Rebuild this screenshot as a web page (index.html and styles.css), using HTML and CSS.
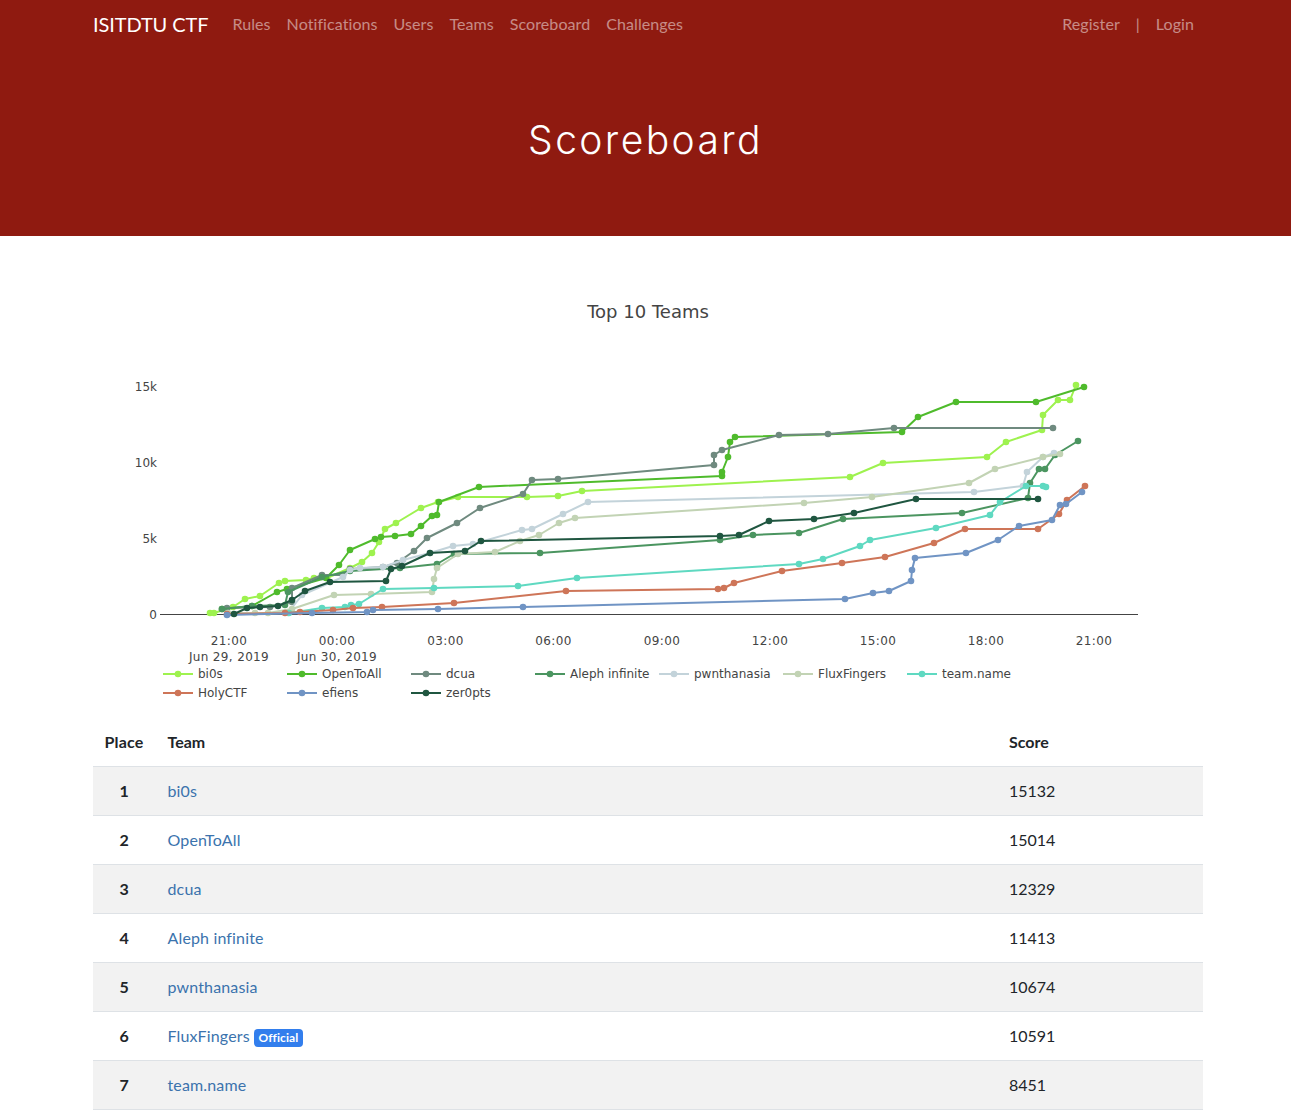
FILE: index.html
```html
<!DOCTYPE html>
<html lang="en">
<head>
<meta charset="utf-8">
<title>Scoreboard</title>
<link rel="stylesheet" href="styles.css">
</head>
<body>
<div class="hero">
  <nav class="navbar">
    <a class="brand" href="#">ISITDTU CTF</a>
    <ul class="nav-left">
      <li><a href="#">Rules</a></li>
      <li><a href="#">Notifications</a></li>
      <li><a href="#">Users</a></li>
      <li><a href="#">Teams</a></li>
      <li><a href="#">Scoreboard</a></li>
      <li><a href="#">Challenges</a></li>
    </ul>
    <ul class="nav-right">
      <li><a href="#">Register</a></li>
      <li class="sep">|</li>
      <li><a href="#">Login</a></li>
    </ul>
  </nav>
  <h1 class="title">Scoreboard</h1>
</div>
<main class="content">
  <svg class="chart" width="1291" height="484" viewBox="0 236 1291 484" xmlns="http://www.w3.org/2000/svg">
    <defs>
      <marker id="m0" class="mk" markerUnits="userSpaceOnUse" markerWidth="8" markerHeight="8" refX="4" refY="4"><circle cx="4" cy="4" r="3.3" class="f0"/></marker>
      <marker id="m1" class="mk" markerUnits="userSpaceOnUse" markerWidth="8" markerHeight="8" refX="4" refY="4"><circle cx="4" cy="4" r="3.3" class="f1"/></marker>
      <marker id="m2" class="mk" markerUnits="userSpaceOnUse" markerWidth="8" markerHeight="8" refX="4" refY="4"><circle cx="4" cy="4" r="3.3" class="f2"/></marker>
      <marker id="m3" class="mk" markerUnits="userSpaceOnUse" markerWidth="8" markerHeight="8" refX="4" refY="4"><circle cx="4" cy="4" r="3.3" class="f3"/></marker>
      <marker id="m4" class="mk" markerUnits="userSpaceOnUse" markerWidth="8" markerHeight="8" refX="4" refY="4"><circle cx="4" cy="4" r="3.3" class="f4"/></marker>
      <marker id="m5" class="mk" markerUnits="userSpaceOnUse" markerWidth="8" markerHeight="8" refX="4" refY="4"><circle cx="4" cy="4" r="3.3" class="f5"/></marker>
      <marker id="m6" class="mk" markerUnits="userSpaceOnUse" markerWidth="8" markerHeight="8" refX="4" refY="4"><circle cx="4" cy="4" r="3.3" class="f6"/></marker>
      <marker id="m7" class="mk" markerUnits="userSpaceOnUse" markerWidth="8" markerHeight="8" refX="4" refY="4"><circle cx="4" cy="4" r="3.3" class="f7"/></marker>
      <marker id="m8" class="mk" markerUnits="userSpaceOnUse" markerWidth="8" markerHeight="8" refX="4" refY="4"><circle cx="4" cy="4" r="3.3" class="f8"/></marker>
      <marker id="m9" class="mk" markerUnits="userSpaceOnUse" markerWidth="8" markerHeight="8" refX="4" refY="4"><circle cx="4" cy="4" r="3.3" class="f9"/></marker>
    </defs>
    <text class="chart-title" x="648" y="318" text-anchor="middle">Top 10 Teams</text>

    <g class="tick" text-anchor="end">
      <text x="157" y="391">15k</text>
      <text x="157" y="467">10k</text>
      <text x="157" y="543">5k</text>
      <text x="157" y="619">0</text>
    </g>
    <line class="axis" x1="160" y1="614.5" x2="1138" y2="614.5"/>
    <g class="tick xtick" text-anchor="middle">
      <text x="229" y="645">21:00</text>
      <text x="229" y="661">Jun 29, 2019</text>
      <text x="337" y="645">00:00</text>
      <text x="337" y="661">Jun 30, 2019</text>
      <text x="445.5" y="645">03:00</text>
      <text x="553.5" y="645">06:00</text>
      <text x="662" y="645">09:00</text>
      <text x="770" y="645">12:00</text>
      <text x="878" y="645">15:00</text>
      <text x="986" y="645">18:00</text>
      <text x="1094" y="645">21:00</text>
    </g>

    <polyline class="s s0" points="210,613 214,613 233,607 245,599 260,596 279,583 285,581 306,580 314,578 327,578 350,568 362,562 372,553 379,542 385,529 396,523 421,508 438,502 458,497 527,497 558,496 582,491 850,477 883,463 987,457 1006,442 1042,430 1043,415 1058,400 1070,400 1076,385"/>
    <polyline class="s s1" points="222,609 252,606 277,592 287,589 326,578 339,565 350,550 375,539 381,537 395,536 411,534 421,526 432,516 437,515 439,502 479,487 722,476 722,472 728,457 730,442 735,437 902,432 918,417 956,402 1036,402 1084,387"/>
    <polyline class="s s2" points="227,608 270,607 292,602 292,588 322,575 343,575 350,569 383,567 397,563 414,551 427,538 457,523 480,508 523,494 532,480 558,479 714,465 714,455 722,450 779,435 828,434 894,428 1053,428"/>
    <polyline class="s s3" points="222,609 252,606 285,605 288,592 322,577 350,571 400,568 437,564 454,554 540,553 720,540 753,535 799,533 843,519 962,513 1028,498 1030,483 1039,469 1045,469 1055,455 1078,441"/>
    <polyline class="s s4" points="228,614 288,613 302,595 343,577 350,570 360,568 383,567 403,560 430,553 453,546 473,544 522,530 532,529 563,514 588,502 974,492 1023,486 1027,472 1043,457 1054,453"/>
    <polyline class="s s5" points="228,613 255,613 268,613 292,609 334,595 371,594 432,592 434,579 437,568 458,554 495,552 520,541 539,535 559,523 575,518 804,503 872,497 969,483 995,469 1043,457 1060,454"/>
    <polyline class="s s6" points="289,613 322,608 345,607 351,605 359,604 383,589 434,588 518,586 577,578 799,564 823,559 860,546 870,540 936,528 990,515 1000,502 1026,486 1043,486 1046,487"/>
    <polyline class="s s7" points="227,614 285,613 300,612 333,610 353,608 382,607 454,603 566,591 718,589 724,588 734,583 782,571 842,563 885,557 934,543 965,529 1038,529 1059,514 1067,500 1085,486"/>
    <polyline class="s s8" points="227,615 312,613 367,612 373,610 438,609 523,607 845,599 873,593 889,591 911,581 912,570 915,558 966,553 998,540 1019,526 1052,520 1060,505 1066,504 1082,492"/>
    <polyline class="s s9" points="234,614 247,608 260,607 278,606 292,600 305,591 330,582 386,581 391,569 402,566 430,553 465,551 481,541 720,536 739,535 769,521 814,519 854,513 916,499 1038,499"/>

    <g class="legend">
      <polyline class="s s0" points="163,674 178,674 193,674"/><text x="198" y="678">bi0s</text>
      <polyline class="s s1" points="287,674 302,674 317,674"/><text x="322" y="678">OpenToAll</text>
      <polyline class="s s2" points="411,674 426,674 441,674"/><text x="446" y="678">dcua</text>
      <polyline class="s s3" points="535,674 550,674 565,674"/><text x="570" y="678">Aleph infinite</text>
      <polyline class="s s4" points="659,674 674,674 689,674"/><text x="694" y="678">pwnthanasia</text>
      <polyline class="s s5" points="783,674 798,674 813,674"/><text x="818" y="678">FluxFingers</text>
      <polyline class="s s6" points="907,674 922,674 937,674"/><text x="942" y="678">team.name</text>
      <polyline class="s s7" points="163,693 178,693 193,693"/><text x="198" y="697">HolyCTF</text>
      <polyline class="s s8" points="287,693 302,693 317,693"/><text x="322" y="697">efiens</text>
      <polyline class="s s9" points="411,693 426,693 441,693"/><text x="446" y="697">zer0pts</text>
    </g>
  </svg>

  <table class="board">
    <thead>
      <tr><th class="col-place">Place</th><th class="col-team">Team</th><th class="col-score">Score</th></tr>
    </thead>
    <tbody>
      <tr><th>1</th><td><a href="#">bi0s</a></td><td>15132</td></tr>
      <tr><th>2</th><td><a href="#">OpenToAll</a></td><td>15014</td></tr>
      <tr><th>3</th><td><a href="#">dcua</a></td><td>12329</td></tr>
      <tr><th>4</th><td><a href="#">Aleph infinite</a></td><td>11413</td></tr>
      <tr><th>5</th><td><a href="#">pwnthanasia</a></td><td>10674</td></tr>
      <tr><th>6</th><td><a href="#">FluxFingers</a> <span class="badge">Official</span></td><td>10591</td></tr>
      <tr><th>7</th><td><a href="#">team.name</a></td><td>8451</td></tr>
    </tbody>
  </table>
</main>
</body>
</html>
```
FILE: styles.css
```css
* { box-sizing: border-box; }
html, body { margin: 0; padding: 0; }
body {
  font-family: Lato, "Liberation Sans", sans-serif;
  font-size: 16px;
  line-height: 24px;
  color: #212529;
  background: #fff;
  height: 1114px;
  overflow: hidden;
}
a { text-decoration: none; }
ul { list-style: none; margin: 0; padding: 0; }

.hero { background: #8f1a10; height: 236px; display: flex; flex-direction: column; }
.navbar { display: flex; align-items: center; height: 48px; padding: 0 89px 0 93px; }
.brand { color: #fff; font-size: 20px; margin-right: 16px; letter-spacing: -0.1px; }
.nav-left, .nav-right { display: flex; }
.nav-left li a, .nav-right li a { color: rgba(255, 255, 255, 0.5); padding: 0 8px; display: block; letter-spacing: 0.08px; }
.nav-right { margin-left: auto; }
.sep { color: rgba(255, 255, 255, 0.5); padding: 0 8px; }
.title {
  margin: 65px 0 0;
  text-align: center;
  color: #fff;
  font-family: Inter, Lato, sans-serif;
  font-weight: 300;
  font-size: 39px;
  line-height: 54px;
  letter-spacing: 2.4px;
}

.content { display: flex; flex-direction: column; }
.chart { display: block; }
.chart-title { font-family: "DejaVu Sans", Verdana, sans-serif; font-size: 18px; fill: #444; }
.tick text, .legend text { font-family: "DejaVu Sans", Verdana, sans-serif; font-size: 12px; fill: #444; }
.xtick text { letter-spacing: 0.35px; }
.axis { stroke: #444; stroke-width: 1; }

.s { fill: none; stroke-width: 2; stroke-linejoin: round; }
.s0 { stroke: #9ef24f; marker: url(#m0); }
.s1 { stroke: #4fbb2c; marker: url(#m1); }
.s2 { stroke: #6f8a7f; marker: url(#m2); }
.s3 { stroke: #4b9560; marker: url(#m3); }
.s4 { stroke: #c3d3da; marker: url(#m4); }
.s5 { stroke: #c2d3b4; marker: url(#m5); }
.s6 { stroke: #5fd9c1; marker: url(#m6); }
.s7 { stroke: #ce7558; marker: url(#m7); }
.s8 { stroke: #7094c4; marker: url(#m8); }
.s9 { stroke: #1f5640; marker: url(#m9); }
.legend .s { marker-start: none; marker-end: none; }
.f0 { fill: #9ef24f; }
.f1 { fill: #4fbb2c; }
.f2 { fill: #6f8a7f; }
.f3 { fill: #4b9560; }
.f4 { fill: #c3d3da; }
.f5 { fill: #c2d3b4; }
.f6 { fill: #5fd9c1; }
.f7 { fill: #ce7558; }
.f8 { fill: #7094c4; }
.f9 { fill: #1f5640; }

.board { width: 1110px; margin: -1px 0 0 93px; border-collapse: collapse; table-layout: fixed; }
.board th, .board td { padding: 12px; height: 49px; border-top: 1px solid #dee2e6; text-align: left; font-weight: 400; vertical-align: middle; }
.board thead th { border-top: 0; border-bottom: 1px solid #dee2e6; font-weight: 700; height: 47px; padding-top: 0; padding-bottom: 0; }
.board thead .col-place { padding-left: 11.5px; letter-spacing: 0.15px; }
.board tbody th { font-weight: 700; text-align: center; }
.board tbody tr:nth-child(odd) { background: #f2f2f2; }
.board tbody tr:last-child th, .board tbody tr:last-child td { border-bottom: 1px solid #dee2e6; }
.board a { color: #3b73ad; letter-spacing: 0.15px; }
.col-place { width: 62.5px; }
.col-score { width: 206px; }
.badge {
  display: inline-block;
  background: #327eed;
  color: #fff;
  font-size: 12px;
  font-weight: 700;
  line-height: 12px;
  padding: 3px 4.5px;
  border-radius: 4px;
  letter-spacing: 0.1px;
  vertical-align: baseline;
}
```
